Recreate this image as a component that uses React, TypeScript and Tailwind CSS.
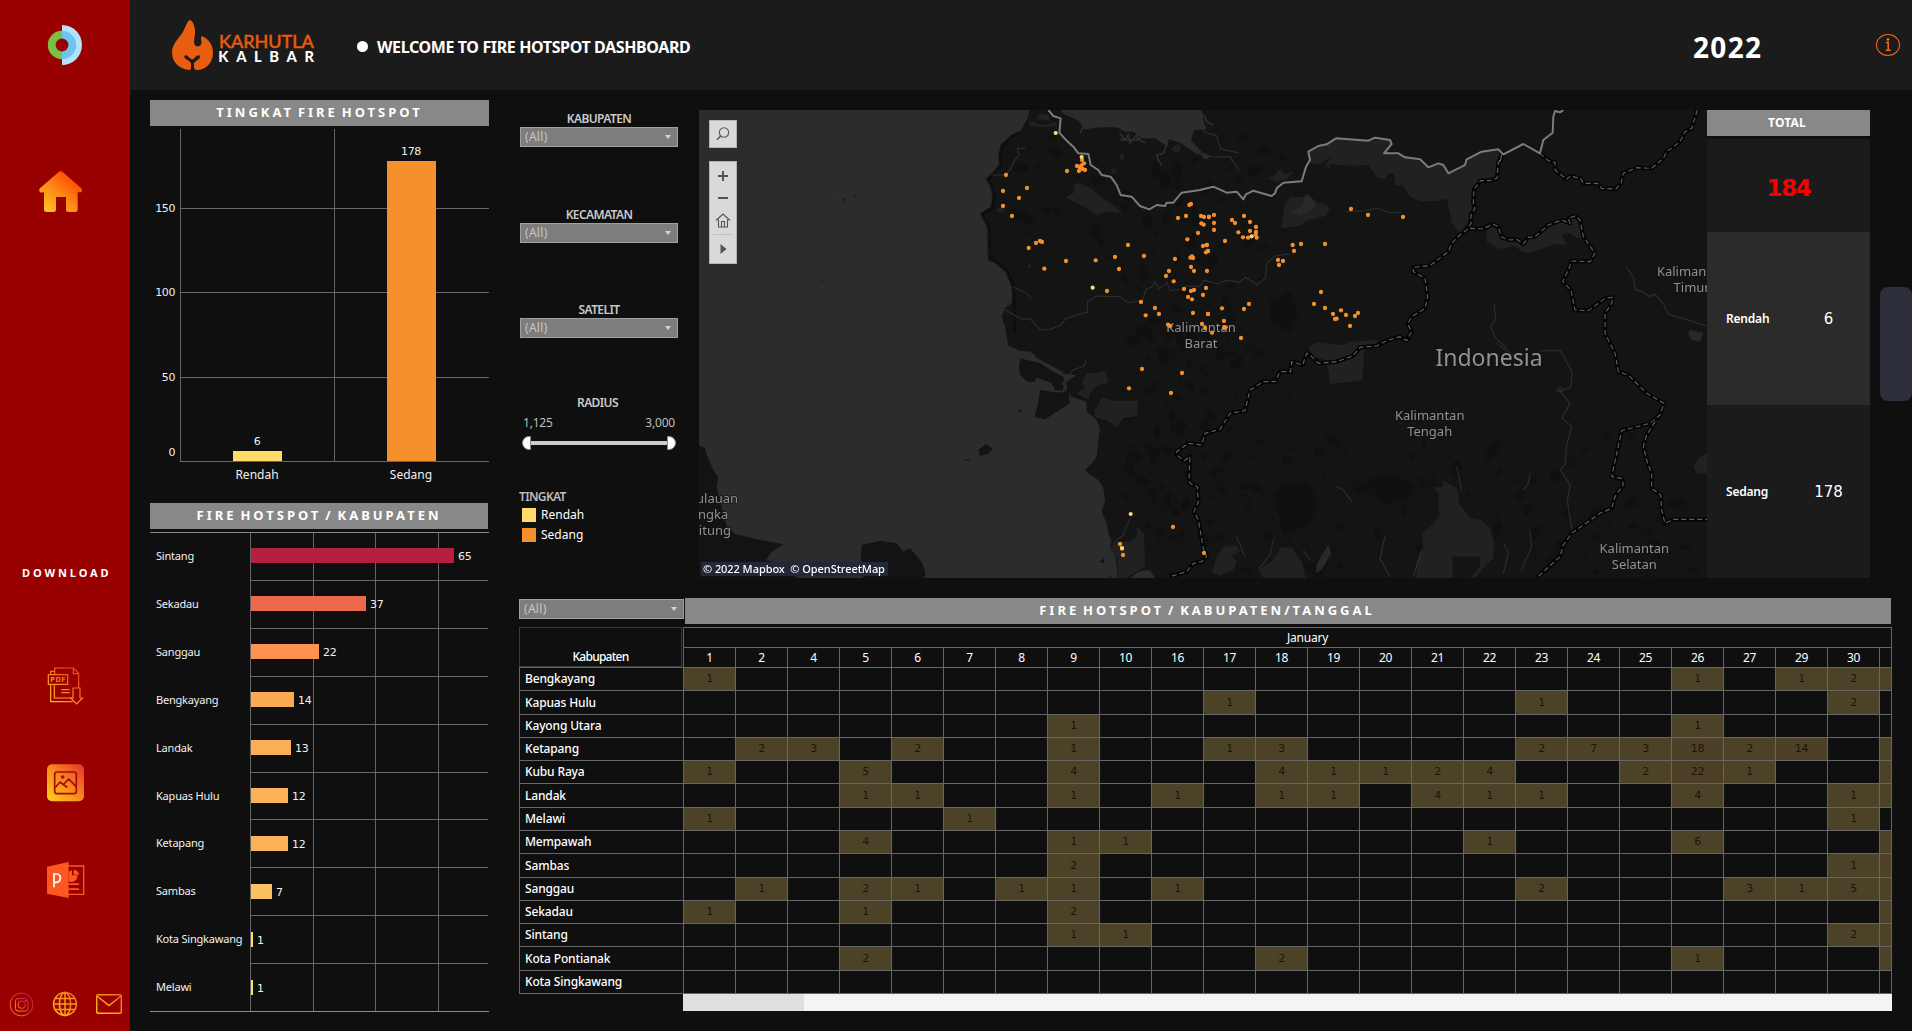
import type { ReactNode } from "react";

const NOTO = "'Noto Sans', sans-serif";
const DEJAVU = "'DejaVu Sans', sans-serif";

/* ---------- sidebar ---------- */

function Gradients() {
  return (
    <svg width="0" height="0" className="absolute">
      <defs>
        <linearGradient id="fire" x1="0" y1="1" x2="1" y2="0">
          <stop offset="0" stopColor="#ffd21a" />
          <stop offset="0.5" stopColor="#f78a1d" />
          <stop offset="1" stopColor="#ea2f2a" />
        </linearGradient>
        <linearGradient id="page" gradientUnits="userSpaceOnUse" x1="145" y1="550" x2="245" y2="445">
          <stop offset="0" stopColor="#ffc81a" />
          <stop offset="0.5" stopColor="#f5821f" />
          <stop offset="1" stopColor="#ea2f2a" />
        </linearGradient>
        <linearGradient id="home" x1="0" y1="1" x2="0.8" y2="0.1">
          <stop offset="0" stopColor="#fdd021" />
          <stop offset="0.5" stopColor="#fb8f18" />
          <stop offset="1" stopColor="#ff4500" />
        </linearGradient>
        <linearGradient id="warm" x1="0" y1="1" x2="1" y2="0">
          <stop offset="0" stopColor="#ffc80f" />
          <stop offset="1" stopColor="#f2682a" />
        </linearGradient>
        <linearGradient id="insta" x1="0" y1="1" x2="1" y2="0">
          <stop offset="0" stopColor="#f29a20" />
          <stop offset="0.6" stopColor="#dd3c2c" />
          <stop offset="1" stopColor="#a81c6c" />
        </linearGradient>
      </defs>
    </svg>
  );
}

function Sidebar() {
  return (
    <aside className="flex h-full w-[130px] shrink-0 flex-col bg-[#990000]">
      <svg width="36" height="42" viewBox="47 24 36 42" className="ml-[47px] mt-6">
        <path d="M62 25a20 20 0 0 1 0 40z" fill="#b5e2f9" />
        <path d="M62 30.8a14.2 14.2 0 0 1 0 28.4z" fill="#6fc3ef" />
        <path d="M62 30.8a14.2 14.2 0 0 0 0 28.4z" fill="#7ac142" />
        <circle cx="62" cy="45" r="6.4" fill="#990000" />
      </svg>
      <svg width="44" height="42" viewBox="117 513 132 126" className="ml-[39px] mt-[105px]">
        <path
          d="M176 516q6-5 12 0l56 49q5 6 0 11-4 3-11-1v54q0 7-7 7h-21q-7 0-7-7v-38h-30v38q0 7-7 7h-22q-7 0-7-7v-54q-8 5-12 1-5-5 0-11z"
          fill="url(#home)"
        />
      </svg>
      <div className="mt-[350px] pl-[22px] text-[11px] leading-5 font-bold tracking-[2.9px] whitespace-nowrap text-white">
        DOWNLOAD
      </div>
      <svg
        width="38"
        height="38"
        viewBox="141 439 114 114"
        fill="none"
        stroke="url(#page)"
        strokeWidth="3.6"
        className="ml-[47px] mt-[84px]"
      >
        <path d="M164 461v-19h57l15 16v44M220 442v17h16M152 461v-9h12M152 492v51h66M163 492v40h54" />
        <path d="M145 462h58v29h-58zM184 507h25M184 516h25" />
        <text x="151" y="485" fill="url(#page)" stroke="none" fontSize="22" fontWeight="700" fontFamily={NOTO} textLength="45">
          PDF
        </text>
        <path d="M219 502h21v30h8l-18 18-18-18h7z" />
      </svg>
      <svg width="38" height="38" viewBox="141 731 114 114" className="ml-[47px] mt-[59px]">
        <rect x="141" y="732" width="111" height="111" rx="15" fill="url(#fire)" />
        <g fill="none" stroke="#a30f08" strokeWidth="5" strokeLinejoin="round" strokeLinecap="round">
          <rect x="164" y="755" width="65" height="65" rx="7" />
          <path d="M167 800l13-15 20 15M192 791l14-15 22 22" />
        </g>
        <circle cx="188" cy="770" r="5.5" fill="#a30f08" />
      </svg>
      <svg width="38" height="36" viewBox="141 1024 114 108" className="ml-[47px] mt-[60px]">
        <path d="M205 1036h46v85h-46" fill="none" stroke="#ff5722" strokeWidth="4" />
        <path d="M206 1054q5-5 10-5v15h16a17 17 0 0 1-26 17zM221 1048a15 15 0 0 1 16 14h-16zM206 1088h31v5h-31zM206 1103h31v5h-31z" fill="#ff5722" />
        <path d="M141 1038l65-14v108l-65-13z" fill="#ff5722" />
        <path d="M162 1100v-40h9q10 1 10 12t-10 13h-9" fill="none" stroke="#fff" strokeWidth="5" />
      </svg>
      <div className="mt-[93px] flex items-center pl-[9px]">
        <svg width="25" height="25" viewBox="0 0 25 25" fill="none" stroke="url(#insta)" strokeWidth="1">
          <circle cx="12.5" cy="12.5" r="11.4" />
          <rect x="6.5" y="6.5" width="12.5" height="12.5" rx="2.5" />
          <circle cx="12.7" cy="12.7" r="3.7" />
          <circle cx="17" cy="8.6" r="0.6" />
        </svg>
        <svg width="26" height="26" viewBox="0 0 26 26" fill="none" stroke="url(#warm)" strokeWidth="1.5" className="ml-[18px]">
          <circle cx="13" cy="13" r="11.4" />
          <ellipse cx="13" cy="13" rx="5.6" ry="11.4" />
          <path d="M13 1.6v22.8M1.6 13h22.8M3.5 7.5h19M3.5 18.5h19" stroke="#f79a1c" />
        </svg>
        <svg width="28" height="24" viewBox="0 0 28 24" fill="none" stroke="url(#warm)" strokeWidth="1.4" className="ml-[17px]">
          <rect x="1.7" y="2.7" width="24.6" height="18.6" rx="1.5" />
          <path d="M2 4l12 9.5L26 4" />
        </svg>
      </div>
    </aside>
  );
}

/* ---------- header ---------- */

function Header() {
  return (
    <header className="flex h-[90px] items-center bg-[#1b1b1b]">
      <svg width="146" height="54" viewBox="510 54 438 162" className="ml-10">
        <path
          d="M570 60C576 62 579 68 582 76C590 98 580 118 583 131C586 142 600 142 604 132C607 122 599 112 606 109C625 115 639 135 639 158C639 186 620 209 591 210C585 210 582 208 582 201L582 190C583 184 600 178 600 170C598 162 590 167 586 171C582 175 580 178 577 178C573 178 570 175 566 171C562 166 555 162 553 170C553 178 572 182 573 190L573 204C573 209 570 210 566 210C538 207 516 188 516 157C516 130 540 112 550 94C558 78 562 62 570 60Z"
          fill="#e85d10"
        />
        <text
          x="657"
          y="144"
          fill="#e85d10"
          stroke="#e85d10"
          strokeWidth="1.6"
          fontSize="53"
          fontFamily="Lato, sans-serif"
          textLength="284"
          lengthAdjust="spacingAndGlyphs"
        >
          KARHUTLA
        </text>
        <text x="655" y="187" fill="#fff" fontSize="44" fontWeight="900" fontFamily="Lato, sans-serif" textLength="287" lengthAdjust="spacing">
          KALBAR
        </text>
      </svg>
      <div className="mt-[2px] ml-[41px] size-[11px] rounded-full bg-white" />
      <h1 className="mt-1 ml-[9px] text-base font-bold tracking-[-0.38px] whitespace-nowrap text-white">
        WELCOME TO FIRE HOTSPOT DASHBOARD
      </h1>
      <div className="mt-[3px] ml-auto w-[71px] text-[28px] leading-none font-bold tracking-[1.3px] text-white">2022</div>
      <svg width="26" height="24" viewBox="0 0 26 24" fill="none" className="mr-[11px] ml-[111px]">
        <ellipse cx="13" cy="12" rx="11.5" ry="10.5" stroke="#ee6a1a" strokeWidth="1.1" />
        <path d="M11 9.500h2.200v7.500M10.800 17.200h4.800" stroke="#ee6a1a" strokeWidth="1.6" />
        <circle cx="13" cy="6.5" r="1.3" fill="#f5881a" />
      </svg>
    </header>
  );
}

function Banner({ children }: { children: ReactNode }) {
  return (
    <div className="flex h-[26px] items-center justify-center bg-[#888] text-[13px] font-bold tracking-[3px] whitespace-pre text-white [word-spacing:-2.5px]">
      {children}
    </div>
  );
}

/* ---------- bar charts ---------- */

function LevelChart() {
  return (
    <svg width="339" height="360" viewBox="150 129 339 360" shapeRendering="crispEdges" className="mt-[3px] block">
      <path d="M180.5 129V461M334.5 129V461M180 208.500H489M180 292.500H489M180 377.500H489M180 461.500H489" stroke="#666" fill="none" />
      <rect x="233" y="451" width="49" height="10" fill="#ffdb69" />
      <rect x="387" y="161" width="49" height="300" fill="#f6902d" />
      <g fill="#f0f0f0" fontSize="11" fontFamily={DEJAVU} letterSpacing="-0.4">
        <text x="175" y="212" textAnchor="end">150</text>
        <text x="175" y="296" textAnchor="end">100</text>
        <text x="175" y="381" textAnchor="end">50</text>
        <text x="175" y="456" textAnchor="end">0</text>
        <text x="411" y="155" textAnchor="middle">178</text>
        <text x="257" y="445" textAnchor="middle">6</text>
      </g>
      <g fill="#f0f0f0" fontSize="12" fontFamily={NOTO} textAnchor="middle">
        <text x="257" y="479">Rendah</text>
        <text x="411" y="479">Sedang</text>
      </g>
    </svg>
  );
}

const regencies: [string, number, string][] = [
  ["Sintang", 65, "#b71f3f"],
  ["Sekadau", 37, "#ec6a4b"],
  ["Sanggau", 22, "#fd934f"],
  ["Bengkayang", 14, "#fbaa51"],
  ["Landak", 13, "#fbae55"],
  ["Kapuas Hulu", 12, "#fab157"],
  ["Ketapang", 12, "#fab157"],
  ["Sambas", 7, "#f7c25f"],
  ["Kota Singkawang", 1, "#ffdb69"],
  ["Melawi", 1, "#ffdb69"],
];

function RegencyChart() {
  return (
    <svg width="339" height="481" viewBox="150 532 339 481" shapeRendering="crispEdges" className="mt-[3px] block">
      <path d="M250.5 532V1011M313.5 532V1011M375.5 532V1011M438.5 532V1011" stroke="#666" />
      {[580, 628, 676, 724, 772, 819, 867, 915, 963].map((y) => (
        <path key={y} d={`M250 ${y + 0.5}H488`} stroke="#666" />
      ))}
      <path d="M150 532.500H489M150 1011.500H489" stroke="#888" />
      {regencies.map(([name, value, color], i) => {
        const width = value === 1 ? 2 : Math.floor(value * 3.125);
        return (
          <g key={name} fill="#f2f2f2" fontSize="11">
            <rect x="251" y={548 + i * 48} width={width} height="15" fill={color} />
            <text x="156" y={560 + i * 47.9} fontFamily={NOTO} letterSpacing="-0.2">
              {name}
            </text>
            <text x={255 + width} y={560 + i * 48} fontFamily={DEJAVU} letterSpacing="-0.3">
              {value}
            </text>
          </g>
        );
      })}
    </svg>
  );
}

/* ---------- filters ---------- */

function Select() {
  return (
    <div className="flex h-5 items-center justify-between border border-[#a0a0a0] bg-[#7d7d7d] pr-[6px] pl-1">
      <span className="text-[12px] leading-none tracking-[0.3px] text-[#c8c8c8]">(All)</span>
      <svg width="6" height="4" viewBox="0 0 6 4">
        <path d="M0 0h6L3 4z" fill="#d4d4d4" />
      </svg>
    </div>
  );
}

function Filter({ label, gap }: { label: string; gap: string }) {
  return (
    <div className={`w-[158px] ${gap}`}>
      <div className="h-[18px] text-center text-[12px] leading-[19px] font-semibold tracking-[-0.6px] text-[#c9c9c9]">{label}</div>
      <Select />
    </div>
  );
}

function Filters() {
  return (
    <div className="flex w-[180px] flex-col pl-px">
      <Filter label="KABUPATEN" gap="-mt-px" />
      <Filter label="KECAMATAN" gap="mt-[58px]" />
      <Filter label="SATELIT" gap="mt-[57px]" />
      <div className="mt-[55px] w-[158px]">
        <div className="h-5 pr-[3px] text-center text-[12px] leading-5 font-semibold tracking-[-0.6px] text-[#c9c9c9]">RADIUS</div>
        <div className="flex h-5 justify-between pr-[3px] pl-[3px] text-[12px] leading-5 tracking-[-0.2px] text-[#bdbdbd]">
          <span>1,125</span>
          <span>3,000</span>
        </div>
        <div className="mt-[3px] flex items-center pl-[2px]">
          <div className="h-[14px] w-[9px] rounded-l-full border border-[#888] bg-white" />
          <div className="h-1 w-[136px] bg-[#ccc]" />
          <div className="h-[14px] w-[9px] rounded-r-full border border-[#888] bg-white" />
        </div>
      </div>
      <div className="mt-[37px] -ml-px text-[12px] leading-[19px] font-semibold tracking-[-0.65px] text-[#bdbdbd]">TINGKAT</div>
      <div className="-mt-px flex h-5 items-center pl-[2px] text-[12px] leading-4 text-white">
        <span className="mr-[5px] size-[14px] bg-[#ffdb69]" />
        Rendah
      </div>
      <div className="flex h-5 items-center pl-[2px] text-[12px] leading-4 text-white">
        <span className="mr-[5px] size-[14px] bg-[#f6902d]" />
        Sedang
      </div>
    </div>
  );
}

/* ---------- map ---------- */

const westDots: [number, number][] = [
  [1131, 213], [1176, 180], [1161, 198], [1170, 203], [1182, 190], [1178, 207], [1185, 210], [1167, 213], [1174, 196],
  [948, 225], [939, 273], [1011, 264], [987, 294], [939, 318], [966, 348], [1016, 444], [1038, 429], [1050, 423], [1056, 426],
  [1063, 506], [1128, 483], [1217, 481], [1275, 471], [1314, 435], [1362, 468], [1287, 507], [1251, 573], [1353, 606],
  [1367, 646], [1395, 624], [1407, 642], [1437, 513], [1428, 528], [1451, 544], [1455, 477], [1464, 354], [1488, 348],
  [1498, 315], [1503, 312], [1533, 348], [1542, 351], [1557, 351], [1534, 370], [1541, 374], [1524, 399], [1492, 418],
  [1539, 438], [1551, 435], [1548, 457], [1554, 453], [1501, 473], [1506, 469], [1509, 474], [1503, 501], [1512, 513],
  [1551, 513], [1482, 567], [1503, 573], [1512, 570], [1494, 591], [1506, 598], [1548, 564], [1539, 585], [1509, 639],
  [1554, 642], [1434, 674], [1441, 678], [1536, 672], [1545, 684], [1356, 807], [1476, 819], [1317, 865], [1443, 879],
  [1449, 1281], [1290, 1332], [1296, 1346], [1299, 1365], [1542, 1359],
];
/* eastern half, x relative to 1530 */
const eastDots: [number, number][] = [
  [27, 351], [42, 345], [42, 369], [42, 390], [96, 360], [105, 369], [132, 348], [150, 366], [168, 381], [115, 397],
  [129, 412], [144, 413], [150, 393], [168, 396], [167, 404], [170, 413], [75, 423], [20, 435], [24, 453], [278, 435],
  [303, 432], [282, 453], [375, 432], [453, 327], [504, 345], [609, 351], [234, 480], [249, 483], [237, 495], [147, 612],
  [132, 627], [66, 625], [72, 663], [72, 684], [77, 682], [24, 642], [36, 698], [123, 714], [363, 576], [342, 612],
  [375, 624], [399, 642], [423, 631], [438, 645], [405, 657], [410, 656], [474, 639], [465, 648], [450, 678],
];
const lowDots: [number, number][] = [
  [1097, 99], [1175, 171], [1208, 563], [1685, 409], [1322, 1242], [1296, 1344],
];

/* soft vegetation patches, placed by a fixed pseudo-random walk over the land */
const patches = Array.from({ length: 420 }, (_, i) => {
  const a = Math.abs(Math.sin(i * 12.9898) * 43758.5453) % 1;
  const b = Math.abs(Math.sin(i * 78.233) * 12543.123) % 1;
  const c = Math.abs(Math.sin(i * 39.425) * 9631.77) % 1;
  const south = i % 3 === 0;
  const x = south ? 1560 + a * 1450 : 990 + a * 830;
  const y = south ? 980 + b * 450 : 110 + b * 1220;
  return { x: x < 1300 && y > 480 ? x + 320 : x, y, r: 3 + c * c * 22, turn: Math.round(a * 180) };
});

const provinces = [
  "M2430 185L2437 160L2425 190L2421 235L2400 242L2372 242L2352 268L2350 310L2355 325L2343 345L2343 370L2332 388L2310 405L2285 430L2275 455L2220 497L2170 502L2170 515L2205 535L2213 590L2205 625L2165 650L2153 672L2165 695L2150 722L2130 710L2090 722L2060 738L2010 742L1988 768L1940 785L1885 790L1860 765L1850 760L1838 795L1805 785L1802 815L1770 815L1755 845L1720 845L1680 870L1665 932L1620 940L1590 988L1545 1000L1535 1035L1495 1030L1460 1055L1460 1065L1482 1082L1500 1070L1497 1120L1500 1150L1522 1160L1525 1205L1512 1235L1525 1260L1540 1345L1550 1370L1535 1385L1510 1390L1490 1415L1440 1430",
  "M2550 160L2575 182L2595 188L2595 210L2630 238L2640 228L2672 235L2680 250L2722 250L2735 265L2778 267L2793 250L2800 220L2840 203L2885 205L2920 175L2930 155L2970 125L2985 95L3005 85L3022 30",
  "M2340 385L2375 387L2410 373L2425 380L2435 412L2460 420L2480 418L2500 432L2515 412L2535 410L2575 375L2615 360L2640 370L2635 355L2655 348L2670 360L2680 410L2715 460L2700 485L2645 483L2635 510L2618 545L2643 570L2655 630L2695 632L2745 595L2768 592L2765 610L2745 640L2745 700L2775 760L2785 815L2815 825L2870 880L2922 910L2910 945L2880 970L2795 992L2765 1130L2795 1135L2800 1155L2775 1190L2765 1225L2730 1240L2645 1300L2620 1335L2610 1370L2560 1415L2540 1435",
  "M2895 965L2870 1005L2860 1040L2873 1090L2885 1120L2885 1165L2912 1185L2915 1230L2925 1270L2950 1258L3051 1258",
];

const rivers =
  "M905 225h40l15-15 15-30 12-15-5-20 25 0M970 562l40 18 12 12M942 628l50 28 30 2 30 32 30-2 30-12 15-20 30-10 35-10v-30l25-18 75 2 20 18 45-6 12-35 15-5 12-18 10 22 25-18 10 24 35-5 10-8 45 0 10-18 40 10 30-10 35 6 20-15 35 22 25-20 5 -45 25 -22 45-5M1970 335l60-3 30-8 40 15 35-3M2810 502l20 30 5 35 25 10 18 12 18-6 25 30 15 30 40 12 72 22M2420 730l30 22 30 25M2412 610l5 45-15 25 15 35 35 30M2552 752l60 0 35 65-5 45-32 10 30 40-25 42 30 25-15 55-5 60-15 15 30 45-8 50 15 90-15 30M1530 75l15 22 35 10 12 40 55 12M1530 160l45 12 45-2 28 42M1020 765l60 32 40 22M1128 870l-10-20 30-40 35-12 5-18M1270 1330l30-25 20-50M1640 1310l15 35 12 30M1750 1320l-10 45-32 40M2085 1310l-15 65 30 55M2300 1100l15 70M2440 1330l15 30-15 60M2520 1290l5 50-30 70M2195 1350l-25 80M1840 1350l20 30M1940 1160l20 10 25 35M2520 1120l-5 30-15 20";

function FireMap() {
  return (
    <div className="relative h-[468px] w-[1008px] shrink-0">
      <svg width="1008" height="468" viewBox="27 30 3024 1404" className="block">
        <rect x="27" y="30" width="3024" height="1404" fill="#2c2c2c" />
        {/* mainland */}
        <path
          d="M1018 30L1015 50L990 95L965 108L935 135L928 165L930 195L908 222L890 236L903 258L910 290L905 322L873 342L885 360L893 375L898 405L895 440L903 465L893 480L920 490L945 510L955 530L965 555L970 580L965 610L945 625L935 650L945 680L950 710L955 738L990 752L1025 755L1045 780L1080 797L1120 822L1160 825L1130 845L1130 870L1145 890L1190 905L1190 935L1220 960L1230 985L1225 1020L1220 1070L1205 1090L1185 1110L1200 1125L1225 1140L1240 1165L1245 1200L1235 1235L1250 1270L1255 1300L1265 1325L1260 1335L1275 1360L1280 1400L1283 1434L1320 1434L1345 1415L1380 1410L1395 1434L3051 1434V30H1535L1540 62L1550 88L1512 90L1503 120L1530 150L1560 172L1548 178L1505 152L1470 128L1437 118L1432 140L1395 115L1355 115L1330 95L1305 95L1280 82L1230 82L1185 88L1165 62L1118 40L1112 30Z"
          fill="#141414"
        />
        <path d="M990 775L1050 790L1090 815L1120 830L1125 845L1118 872L1095 870L1085 850L1060 840L1038 832L1035 845L1012 845L990 825L987 800ZM1050 870L1085 875L1115 878L1135 870L1140 910L1105 932L1065 958L1033 950L1045 910ZM865 1050L888 1033L908 1047L895 1062L870 1068ZM822 1079h18v3h-18zM983 932l10-4-3 10zM1228 1385l15-10v15zM1255 1430l8-4 2 8z" fill="#131313" />
        <path d="M27 1035L45 1045L50 1065L70 1110L85 1132L80 1160L95 1220L110 1280L135 1302L200 1318L280 1333L245 1355L228 1380L300 1400L320 1434H27ZM515 1335L570 1322L620 1330L640 1355L660 1345L695 1385L707 1420L702 1434H520L513 1375Z" fill="#131313" />
        {/* vegetation */}
        <g fill="#0c0c0c" opacity="0.4">
          {patches.map((p, i) => (
            <ellipse key={i} cx={p.x} cy={p.y} rx={p.r} ry={p.r * 0.6} transform={`rotate(${p.turn} ${p.x} ${p.y})`} />
          ))}
          <path d="M2010 1160q60-60 110-30l55 20q-10 60-90 60zM1750 1180q60-60 110-20l30 60-40 60-70 20zM1740 600l50-20 40 60-30 60-60-30z" />
        </g>
        {/* coastal shading */}
        <path
          d="M990 97L965 110L937 137L930 165L932 195L910 222L893 238L905 258L912 290L907 322L876 342L896 380L898 470L950 512L970 560L975 700"
          fill="none"
          stroke="#0b0b0b"
          strokeWidth="10"
          opacity="0.7"
        />
        {/* protected areas and lakes */}
        <g fill="#212121">
          <path d="M1128 292L1155 275L1150 255L1165 248L1205 265L1225 285L1270 315L1297 338L1250 335L1222 345L1190 325L1150 305ZM1018 62L1060 75L1095 65L1105 78L1060 82L1018 78ZM1048 40L1075 45L1080 62L1040 58Z" />
          <path d="M1860 190L1855 155L1940 115L2040 122L2100 118L2105 132L2085 160L2160 172L2220 200L2255 190L2275 220L2325 195L2330 178L2375 155L2430 150L2425 235L2375 245L2350 270L2345 345L2310 402L2285 370L2280 340L2270 295L2240 303L2190 303L2160 290L2140 258L2115 255L2112 222L2100 218L2085 238L2060 232L2035 195L1990 198L1945 195L1925 190L1915 208L1908 195L1922 172L1885 195Z" />
          <path d="M1773 385L1785 310L1800 292L1840 290L1860 285L1870 305L1900 310L1920 325L1905 348L1850 362L1830 378Z" />
          <path d="M1735 235L1755 225L1772 205L1780 222L1810 215L1790 238L1760 245ZM2390 395L2405 380L2425 390L2440 420L2500 430L2540 400L2600 368L2665 350L2678 418L2655 412L2640 400L2615 405L2632 435L2600 432L2520 458L2500 455L2470 437L2430 448L2390 425Z" />
          <path d="M1855 740L1880 728L1960 735L1975 725L2070 720L2020 755L2020 800L2018 840L1985 845L1920 852L1915 810L1905 780L1870 770Z" />
          <path d="M1160 880L1185 865L1175 845L1190 820L1225 818L1245 813L1256 848L1225 855L1200 880L1195 900ZM1213 930L1225 915L1235 890L1270 902L1345 902L1340 948L1300 955L1278 982L1250 960L1215 952Z" />
          <path d="M1340 1280L1362 1300L1365 1400L1345 1412L1310 1434L1285 1434L1282 1375L1258 1345L1275 1330L1320 1325L1340 1310ZM1565 1415L1580 1370L1600 1340L1640 1335L1650 1355L1625 1365L1640 1385L1630 1410L1590 1428ZM1705 1410L1745 1385L1775 1340L1805 1345L1835 1385L1848 1434H1720Z" />
          <path d="M2180 1434L2180 1385L2200 1340L2198 1300L2225 1275L2248 1248L2245 1180L2230 1162L2260 1160L2258 1140L2300 1165L2310 1215L2340 1255L2375 1260L2400 1285L2412 1330L2410 1375L2375 1410L2355 1434L2340 1434L2370 1400L2370 1370H2288V1434Z" />
          <path d="M1018 488l8 15-15 0zM915 330l15-10 15 8-15 12zM3010 1100l20-30 21-10v60h-30zM2597 865l15-8 10 10-8 12-15-4z" />
          <path d="M1440 150l20-20 15 10-10 20zM1290 165l10-5 5 15-15 5zM1262 210l10-6 10 14-16 2z" />
        </g>
        <path d="M1805 335L1835 318L1848 282L1860 290L1878 305L1870 330L1830 345ZM3000 690l40 10-10 25-25-5-10-20zM1880 1395l15-30 20-30 8 25-25 45-20 15z" fill="#292929" />
        <path d="M1290 100l15 20 10-15 5 25 20-25 5 15 18-20M1170 100l10-20M1290 120l60 0 15 8M1400 165l20-5 10-25M1400 165l5 15 10 15M1305 60l5 35M1340 90l15-18M1530 40l14 10 6 15 20 10M435 290l20-8M487 290l15-4" stroke="#2e2e2e" strokeWidth="5" fill="none" />
        <path d="M458 297l6-2 0 8-6 0zM488 293l5-10 6 6zM832 352l2 8M870 432h3v3h-3zM390 542l8-2-3 6z" fill="#191919" />
        <path d={rivers} fill="none" stroke="#2f2f2f" strokeWidth="3.2" />
        {/* borders */}
        {provinces.map((d) => (
          <g key={d} fill="none" strokeLinejoin="round">
            <path d={d} stroke="#050505" strokeWidth="13" />
            <path d={d} stroke="#606060" strokeWidth="3.4" strokeDasharray="15 9" />
          </g>
        ))}
        <path
          d="M1075 30L1090 48L1112 55L1108 98L1130 122L1150 140L1165 160L1195 162L1202 195L1225 210L1235 225L1262 230L1280 255L1292 285L1325 290L1350 318L1378 328L1400 315L1425 318L1430 308L1450 308L1475 278L1530 270L1570 260L1610 278L1640 275L1660 298L1668 283L1690 272L1745 288L1755 280L1760 265L1780 248L1835 244L1848 200L1860 180L1855 155L1885 138L1910 133L1938 115L2035 122L2055 113L2100 120L2105 132L2082 160L2125 160L2145 172L2190 178L2215 202L2245 190L2260 195L2275 220L2325 195L2330 178L2375 155L2425 148L2440 163L2500 132L2550 160L2560 120L2588 98L2590 50L2595 33L2610 37L2620 30"
          fill="none"
          stroke="#7c7c7c"
          strokeWidth="6"
          strokeLinejoin="round"
        />
        <g fill="#929292" stroke="#111" strokeWidth="4" paintOrder="stroke" fontSize="39" fontFamily={NOTO} textAnchor="middle">
          <text x="1533" y="697">Kalimantan</text>
          <text x="1533" y="744">Barat</text>
          <text x="2219" y="960">Kalimantan</text>
          <text x="2219" y="1007">Tengah</text>
          <text x="2833" y="1360">Kalimantan</text>
          <text x="2833" y="1407">Selatan</text>
          <text x="3005" y="528">Kalimantan</text>
          <text x="3005" y="575">Timur</text>
          <text x="46" y="1210">Kepulauan</text>
          <text x="46" y="1257">Bangka</text>
          <text x="46" y="1305">Belitung</text>
          <text x="2397" y="797" fontSize="69">Indonesia</text>
        </g>
        <g fill="#f6902d">
          {westDots.map(([x, y], i) => (
            <circle key={i} cx={x} cy={y} r="6.4" />
          ))}
          {eastDots.map(([x, y], i) => (
            <circle key={i} cx={x + 1530} cy={y} r="6.4" />
          ))}
        </g>
        <g fill="#ffdb69">
          {lowDots.map(([x, y], i) => (
            <circle key={i} cx={x} cy={y} r="6.2" />
          ))}
        </g>
      </svg>
      <div className="absolute top-[10px] left-[10px] flex w-7 flex-col gap-[13px] text-[#555]">
        <div className="flex size-7 items-center justify-center border border-[#b3b3b3] bg-[#d9d9d9]">
          <svg width="14" height="14" viewBox="0 0 14 14" fill="none" stroke="currentColor" strokeWidth="1.1">
            <circle cx="8" cy="5.5" r="4.7" />
            <path d="M4.7 9L1 12.8" strokeWidth="1.5" />
          </svg>
        </div>
        <div className="flex h-[103px] flex-col items-center border border-[#b3b3b3] bg-[#d9d9d9]">
          <svg width="26" height="101" viewBox="0 0 26 101" fill="none" stroke="currentColor">
            <path d="M8 14h10M13 9v10M8 36h10" strokeWidth="2" />
            <path d="M6 58.5l7-6.5 7 6.5M8.500 57.500v7.500h9v-7.500M11.500 65v-5.500h3v5.500" strokeWidth="1.1" />
            <path d="M3 72.500h20" stroke="#c0c0c0" />
            <path d="M10.500 82l6 5-6 5z" fill="currentColor" stroke="none" />
          </svg>
        </div>
      </div>
      <div className="absolute bottom-[2px] left-[2px] flex h-[14px] w-[187px] items-center bg-[#23273a] pb-px pl-[2px] text-[11px] leading-none font-medium tracking-[-0.06px] whitespace-pre text-white">
        {"© 2022 Mapbox  © OpenStreetMap"}
      </div>
    </div>
  );
}

/* ---------- totals ---------- */

function Totals() {
  return (
    <div className="flex h-[468px] w-[163px] shrink-0 flex-col">
      <div className="flex h-[26px] items-center justify-center bg-[#888] pr-[3px] text-[12px] font-bold tracking-[0.2px] text-white">TOTAL</div>
      <div className="mt-[3px] flex h-[93px] items-center justify-center bg-[#1b1b1b] pt-[6px] font-['DejaVu_Sans'] text-[23px] font-bold tracking-[-1.3px] text-[#f80000]">
        184
      </div>
      <div className="flex h-[173px] items-center bg-[#2b2b2b] pt-px text-white">
        <span className="w-[81px] pl-[19px] text-[12px] font-semibold tracking-[-0.2px]">Rendah</span>
        <span className="w-[81px] text-center font-['DejaVu_Sans'] text-[15px]">6</span>
      </div>
      <div className="flex h-[173px] items-center bg-[#1b1b1b] pt-px text-white">
        <span className="w-[81px] pl-[19px] text-[12px] font-semibold tracking-[-0.2px]">Sedang</span>
        <span className="w-[81px] text-center font-['DejaVu_Sans'] text-[15px]">178</span>
      </div>
    </div>
  );
}

/* ---------- daily table ---------- */

const days = [1, 2, 4, 5, 6, 7, 8, 9, 10, 16, 17, 18, 19, 20, 21, 22, 23, 24, 25, 26, 27, 29, 30];

type Row = { name: string; tall?: boolean; next?: boolean; v: Record<number, number> };

const rows: Row[] = [
  { name: "Bengkayang", next: true, v: { 1: 1, 26: 1, 29: 1, 30: 2 } },
  { name: "Kapuas Hulu", tall: true, v: { 17: 1, 23: 1, 30: 2 } },
  { name: "Kayong Utara", v: { 9: 1, 26: 1 } },
  { name: "Ketapang", next: true, v: { 2: 2, 4: 3, 6: 2, 9: 1, 17: 1, 18: 3, 23: 2, 24: 7, 25: 3, 26: 18, 27: 2, 29: 14 } },
  { name: "Kubu Raya", next: true, v: { 1: 1, 5: 5, 9: 4, 18: 4, 19: 1, 20: 1, 21: 2, 22: 4, 25: 2, 26: 22, 27: 1 } },
  { name: "Landak", tall: true, next: true, v: { 5: 1, 6: 1, 9: 1, 16: 1, 18: 1, 19: 1, 21: 4, 22: 1, 23: 1, 26: 4, 30: 1 } },
  { name: "Melawi", v: { 1: 1, 7: 1, 30: 1 } },
  { name: "Mempawah", next: true, v: { 5: 4, 9: 1, 10: 1, 22: 1, 26: 6 } },
  { name: "Sambas", tall: true, next: true, v: { 9: 2, 30: 1 } },
  { name: "Sanggau", next: true, v: { 2: 1, 5: 2, 6: 1, 8: 1, 9: 1, 16: 1, 23: 2, 27: 3, 29: 1, 30: 5 } },
  { name: "Sekadau", next: true, v: { 1: 1, 5: 1, 9: 2 } },
  { name: "Sintang", next: true, v: { 9: 1, 10: 1, 30: 2 } },
  { name: "Kota Pontianak", tall: true, next: true, v: { 5: 2, 18: 2, 26: 1 } },
  { name: "Kota Singkawang", v: {} },
];

function shade(n?: number) {
  if (!n) return "";
  if (n > 20) return "bg-[#4c3f25]";
  if (n > 10) return "bg-[#4c4026]";
  return "bg-[#4c4227]";
}

function DailyTable() {
  return (
    <section className="mt-5 w-[1373px]">
      <div className="flex">
        <div className="w-[165px] pt-px">
          <Select />
        </div>
        <div className="ml-px w-[1206px] bg-[#888] pr-[162px]">
          <Banner>FIRE HOTSPOT / KABUPATEN/TANGGAL</Banner>
        </div>
      </div>
      <div className="mt-[3px] text-[12px] text-white">
        <div className="flex h-10">
          <div className="mr-px flex w-[163px] items-end justify-center border border-[#3a3a3a] font-medium tracking-[-0.75px]">
            <span className="h-[19px] leading-[19px]">Kabupaten</span>
          </div>
          <div className="flex flex-1 flex-col border-r border-[#666]">
            <div className="flex h-5 items-center justify-center border-t border-l border-[#666] pl-10 tracking-[-0.2px]">January</div>
            <div className="flex h-5 border-t border-[#666]">
              {days.map((d) => (
                <div key={d} className="w-[52px] border-l border-[#666] text-center text-[12px] leading-[19px] tracking-[-0.3px]">
                  {d}
                </div>
              ))}
              <div className="flex-1 border-l border-[#666]" />
            </div>
          </div>
        </div>
        <div className="border-r border-b border-[#666]">
          {rows.map((r) => (
            <div key={r.name} className={`flex border-t border-[#666] ${r.tall ? "h-6" : "h-[23px]"}`}>
              <div className="flex w-[164px] items-center border-l border-[#666] pl-[5px] font-medium tracking-[-0.15px]">{r.name}</div>
              {days.map((d) => (
                <div
                  key={d}
                  className={`flex w-[52px] items-center justify-center border-l border-[#666] pt-px font-['DejaVu_Sans'] text-[11px] tracking-[-0.3px] text-[#1a160d] ${shade(r.v[d])}`}
                >
                  {r.v[d] ?? ""}
                </div>
              ))}
              <div className={`flex-1 border-l border-[#666] ${r.next ? "bg-[#4c4227]" : ""}`} />
            </div>
          ))}
        </div>
        <div className="ml-[164px] h-[17px] bg-[#f4f4f4]">
          <div className="h-full w-[121px] bg-[#e0e0e0]" />
        </div>
      </div>
    </section>
  );
}

export default function App() {
  return (
    <div className="flex h-[1031px] w-[1912px] overflow-hidden bg-[#0f0f0f] font-['Noto_Sans',sans-serif]">
      <Gradients />
      <Sidebar />
      <div className="flex flex-1 flex-col">
        <Header />
        <main className="flex flex-1 pl-5">
          <section className="w-[339px] pt-[10px]">
            <Banner>TINGKAT FIRE HOTSPOT</Banner>
            <LevelChart />
            <div className="mt-[14px] w-[338px]">
              <Banner>FIRE HOTSPOT / KABUPATEN</Banner>
            </div>
            <RegencyChart />
          </section>
          <div className="ml-[30px] flex flex-1 flex-col pt-5">
            <div className="flex h-[468px]">
              <Filters />
              <FireMap />
              <Totals />
              <div className="mt-[177px] ml-[10px] h-[114px] w-8 rounded-lg bg-[#2c2f3b]" />
            </div>
            <DailyTable />
          </div>
        </main>
      </div>
    </div>
  );
}
